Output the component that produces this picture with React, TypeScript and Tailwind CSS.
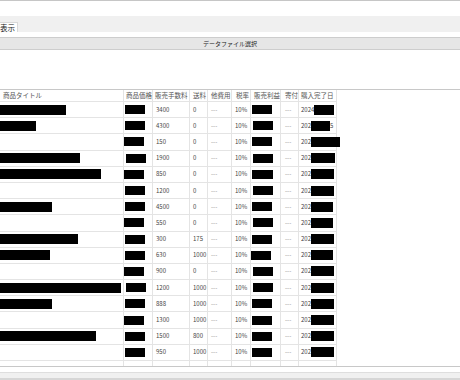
import React from "react";

const cols = [124, 29, 37, 18, 24, 19, 30, 18, 38];
const headers = ["商品タイトル", "商品価格", "販売手数料", "送料", "他費用", "税率", "販売利益", "寄付", "購入完了日"];
const headerPad = [3, 2, 2, 3, 3, 4, 3, 4, 2];

type Row = {
  title: number;
  pOff: number;
  pW: number;
  fee: string;
  ship: string;
  prOff: number;
  prW: number;
  dPre: string;
  dW: number;
  dPost?: string;
};

const rows: Row[] = [
  { title: 66, pOff: 1, pW: 20, fee: "3400", ship: "0", prOff: 1, prW: 20, dPre: "2024", dW: 20 },
  { title: 36, pOff: 1, pW: 20, fee: "4300", ship: "0", prOff: 2, prW: 20, dPre: "202", dW: 19, dPost: "5" },
  { title: 0, pOff: 0, pW: 20, fee: "150", ship: "0", prOff: 1, prW: 20, dPre: "202", dW: 29 },
  { title: 80, pOff: 2, pW: 20, fee: "1900", ship: "0", prOff: 2, prW: 20, dPre: "202", dW: 24 },
  { title: 101, pOff: 0, pW: 20, fee: "850", ship: "0", prOff: 1, prW: 21, dPre: "202", dW: 23 },
  { title: 0, pOff: 1, pW: 20, fee: "1200", ship: "0", prOff: 2, prW: 20, dPre: "202", dW: 23 },
  { title: 52, pOff: 1, pW: 20, fee: "4500", ship: "0", prOff: 1, prW: 20, dPre: "202", dW: 22 },
  { title: 0, pOff: 0, pW: 20, fee: "550", ship: "0", prOff: 2, prW: 20, dPre: "202", dW: 22 },
  { title: 78, pOff: 1, pW: 20, fee: "300", ship: "175", prOff: 1, prW: 20, dPre: "202", dW: 23 },
  { title: 50, pOff: 1, pW: 20, fee: "630", ship: "1000", prOff: 0, prW: 20, dPre: "202", dW: 22 },
  { title: 0, pOff: 0, pW: 20, fee: "900", ship: "0", prOff: 2, prW: 20, dPre: "202", dW: 23 },
  { title: 121, pOff: 2, pW: 20, fee: "1200", ship: "1000", prOff: 2, prW: 20, dPre: "202", dW: 23 },
  { title: 52, pOff: 1, pW: 20, fee: "888", ship: "1000", prOff: 1, prW: 20, dPre: "202", dW: 23 },
  { title: 0, pOff: 0, pW: 20, fee: "1300", ship: "1000", prOff: 1, prW: 20, dPre: "202", dW: 23 },
  { title: 96, pOff: 1, pW: 20, fee: "1500", ship: "800", prOff: 1, prW: 20, dPre: "202", dW: 23 },
  { title: 0, pOff: 1, pW: 20, fee: "950", ship: "1000", prOff: 1, prW: 20, dPre: "202", dW: 23 },
];

function Cell({ w, children, pl = 0, h }: { w: number; children?: React.ReactNode; pl?: number; h?: string }) {
  return (
    <div
      className="flex items-center border-r border-[#e4e4e4] whitespace-nowrap"
      style={{ width: w, paddingLeft: pl }}
    >
      {children}
    </div>
  );
}

export default function App() {
  return (
    <div
      className="w-[460px] h-[380px] bg-white overflow-hidden flex flex-col text-[#444]"
      style={{ fontFamily: '"Noto Sans CJK JP", "Liberation Sans", sans-serif' }}
    >
      <div className="h-[1px] bg-[#c6c6c6] shrink-0" />
      <div className="h-[15px] shrink-0" />
      <div className="h-[16px] bg-[#f0f0f0] flex items-end shrink-0">
        <div className="w-[18px] h-[10px] bg-white border-r border-t border-[#d9d9d9] flex items-center text-[7.5px] leading-none text-[#222]">
          表示
        </div>
      </div>
      <div className="h-[5px] shrink-0" />
      <div className="h-[13px] bg-[#e6e6e6] border-y border-[#cdcdcd] flex items-center justify-center text-[6px] leading-none text-[#222] shrink-0">
        データファイル選択
      </div>
      <div className="h-[39px] shrink-0" />
      <div className="border-t border-[#c8c8c8] shrink-0">
        <div className="w-[337px]">
          <div className="flex h-[12px] border-b border-[#e4e4e4] text-[6.5px] leading-none text-[#555]">
            {headers.map((h, i) => (
              <Cell key={i} w={cols[i]} pl={headerPad[i]}>
                {h}
              </Cell>
            ))}
          </div>
          {rows.map((r, i) => (
            <div key={i} className="flex h-[16.2px] border-b border-[#e4e4e4] text-[6px] leading-none">
              <Cell w={cols[0]}>
                {r.title > 0 && <div className="h-[10px] bg-black" style={{ width: r.title }} />}
              </Cell>
              <Cell w={cols[1]}>
                <div className="h-[9px] bg-black" style={{ width: r.pW, marginLeft: r.pOff }} />
              </Cell>
              <Cell w={cols[2]} pl={3}>
                {r.fee}
              </Cell>
              <Cell w={cols[3]} pl={3}>
                {r.ship}
              </Cell>
              <Cell w={cols[4]} pl={3}>
                <span className="text-[#888]">---</span>
              </Cell>
              <Cell w={cols[5]} pl={3}>
                10%
              </Cell>
              <Cell w={cols[6]}>
                <div className="h-[9px] bg-black" style={{ width: r.prW, marginLeft: r.prOff }} />
              </Cell>
              <Cell w={cols[7]} pl={4}>
                <span className="text-[#888]">---</span>
              </Cell>
              <Cell w={cols[8]} pl={2}>
                <span>{r.dPre}</span>
                <div className="h-[10px] bg-black shrink-0" style={{ width: r.dW }} />
                {r.dPost && <span>{r.dPost}</span>}
              </Cell>
            </div>
          ))}
          <div className="flex h-[5px]">
            {cols.map((w, i) => (
              <Cell key={i} w={w} />
            ))}
          </div>
        </div>
      </div>
      <div className="h-[1px] bg-[#c8c8c8] shrink-0" />
      <div className="h-[5px] shrink-0" />
      <div className="h-[1px] bg-[#dedede] shrink-0" />
      <div className="flex-1 bg-[#f0f0f0] border-b-2 border-[#d6d6d6]" />
    </div>
  );
}
